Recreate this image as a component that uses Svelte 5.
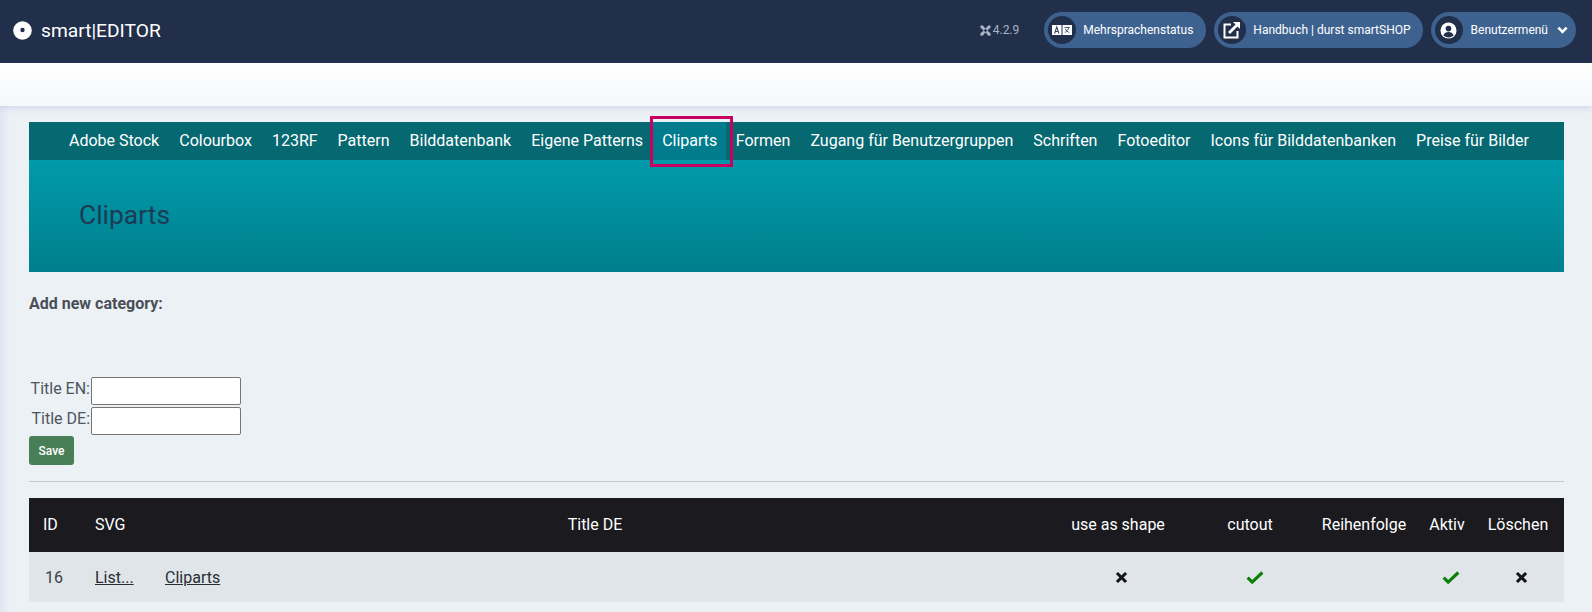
<script lang="ts">
  const navItems = [
    'Adobe Stock', 'Colourbox', '123RF', 'Pattern', 'Bilddatenbank', 'Eigene Patterns', 'Cliparts',
    'Formen', 'Zugang für Benutzergruppen', 'Schriften', 'Fotoeditor', 'Icons für Bilddatenbanken', 'Preise für Bilder'
  ];
</script>

<div class="page">
  <header class="topbar">
    <div class="brand">
      <svg class="logo" viewBox="0 0 20 20" width="19" height="19">
        <circle cx="10" cy="10" r="9.800" fill="#fff" />
        <circle cx="10" cy="9.500" r="2.300" fill="#212f4a" />
      </svg>
      <span>smart|EDITOR</span>
    </div>
    <div class="actions">
      <span class="version">
        <svg viewBox="0 0 12 12" width="11" height="11">
          <path d="M2 2l8 8M10 2l-8 8" stroke="#aab3c2" stroke-width="3" fill="none" />
          <circle cx="2" cy="2" r="1.700" fill="#aab3c2" /><circle cx="10" cy="2" r="1.700" fill="#aab3c2" />
          <circle cx="2" cy="10" r="1.700" fill="#aab3c2" /><circle cx="10" cy="10" r="1.700" fill="#aab3c2" />
          <path d="M6 4.200L7.800 6 6 7.800 4.200 6z" fill="#212f4a" />
        </svg>
        4.2.9
      </span>
      <a class="pill lang">
        <span class="pill-icon">
          <svg viewBox="0 0 20 10" width="20" height="10">
            <rect x="0" y="0" width="9.500" height="10" fill="#fff" />
            <rect x="10.500" y="0" width="9.500" height="10" fill="#fff" />
            <path d="M2.600 8.500L4.750 2l2.150 6.500M3.400 6.500h2.700" stroke="#3a4a68" stroke-width="1.100" fill="none" />
            <path d="M12.500 2.500h5M16.800 2.500c-.6 2.600-2.200 4-4 5M13.400 4c.7 1.600 2 2.800 3.800 3.500" stroke="#3a4a68" stroke-width=".9" fill="none" />
          </svg>
        </span>
        Mehrsprachenstatus
      </a>
      <a class="pill">
        <span class="pill-icon">
          <svg viewBox="0 0 18 18" width="18" height="18">
            <path d="M8 3.500H1.500v13H14.500V10" stroke="#fff" stroke-width="2" fill="none" />
            <path d="M6 12L14.500 3.500" stroke="#fff" stroke-width="2.800" fill="none" />
            <path d="M10 1h7v7z" fill="#fff" />
          </svg>
        </span>
        Handbuch | durst smartSHOP
      </a>
      <a class="pill user">
        <span class="pill-icon">
          <svg viewBox="0 0 18 18" width="17" height="17">
            <circle cx="9" cy="9" r="8.500" fill="#fff" />
            <circle cx="9" cy="7" r="3" fill="#212f4a" />
            <path d="M3.600 14c1-2.600 3-3.400 5.400-3.400s4.400.8 5.400 3.400c-1.400 1.400-3.300 2.300-5.400 2.300s-4-.9-5.400-2.300z" fill="#212f4a" />
          </svg>
        </span>
        Benutzermenü
        <svg class="chevron" viewBox="0 0 12 8" width="11" height="8">
          <path d="M1.500 1.500L6 6l4.500-4.500" stroke="#fff" stroke-width="2.800" fill="none" />
        </svg>
      </a>
    </div>
  </header>

  <div class="subbar"></div>

  <main class="content">
    <nav class="tabs">
      {#each navItems as item}
        <a class="tab" class:current={item === 'Cliparts'}>{item}</a>
      {/each}
    </nav>
    <div class="hero"><h1>Cliparts</h1></div>

    <p class="add-title">Add new category:</p>

    <form class="add-form">
      <div class="field"><label for="title-en">Title EN:</label><input id="title-en" type="text" /></div>
      <div class="field"><label for="title-de">Title DE:</label><input id="title-de" type="text" /></div>
      <button type="button" class="save">Save</button>
    </form>

    <hr />

    <table>
      <thead>
        <tr>
          <th class="c-id">ID</th>
          <th class="c-svg">SVG</th>
          <th class="c-title">Title DE</th>
          <th class="c-shape">use as shape</th>
          <th class="c-cutout">cutout</th>
          <th class="c-order">Reihenfolge</th>
          <th class="c-active">Aktiv</th>
          <th class="c-delete">Löschen</th>
        </tr>
      </thead>
      <tbody>
        <tr>
          <td class="c-id">16</td>
          <td class="c-svg"><a href="#list">List...</a></td>
          <td class="c-title"><a href="#cliparts">Cliparts</a></td>
          <td class="c-shape">
            <svg viewBox="0 0 12 12" width="13" height="13"><path d="M1.800 1.800l8.400 8.400M10.200 1.800l-8.400 8.400" stroke="#14141a" stroke-width="2.800" fill="none" /></svg>
          </td>
          <td class="c-cutout">
            <svg viewBox="0 0 16 12" width="18" height="14"><path d="M1.500 6.500l4 4 9-8.500" stroke="#0a8008" stroke-width="2.800" fill="none" /></svg>
          </td>
          <td class="c-order"></td>
          <td class="c-active">
            <svg viewBox="0 0 16 12" width="18" height="14"><path d="M1.500 6.500l4 4 9-8.500" stroke="#0a8008" stroke-width="2.800" fill="none" /></svg>
          </td>
          <td class="c-delete">
            <svg viewBox="0 0 12 12" width="13" height="13"><path d="M1.800 1.800l8.400 8.400M10.200 1.800l-8.400 8.400" stroke="#14141a" stroke-width="2.800" fill="none" /></svg>
          </td>
        </tr>
      </tbody>
    </table>
  </main>
</div>

<style>
  :global(body) {
    margin: 0;
    background: #ecf1f6;
    font-family: Roboto, "Liberation Sans", sans-serif;
  }

  .page {
    height: 612px;
    overflow: hidden;
    position: relative;
    background: linear-gradient(90deg, #dfe5f2 0, #ecf1f6 10px);
  }

  .topbar {
    height: 63px;
    box-sizing: border-box;
    padding: 0 16px 3px 13px;
    background: #212f4a;
    display: flex;
    align-items: center;
    justify-content: space-between;
    color: #fff;
  }

  .brand {
    display: flex;
    align-items: center;
    gap: 9px;
    font-size: 19.200px;
  }

  .logo {
    display: block;
  }

  .actions {
    display: flex;
    align-items: center;
    gap: 8px;
  }

  .version {
    display: flex;
    align-items: center;
    gap: 2px;
    font-size: 12px;
    color: #aab3c2;
    margin-right: 17px;
  }

  .pill {
    height: 36px;
    box-sizing: border-box;
    display: flex;
    align-items: center;
    gap: 7px;
    padding: 0 12px 0 4px;
    background: #3e6290;
    border-radius: 18px;
    font-size: 12px;
    color: #fff;
  }

  .lang {
    padding-right: 13px;
  }

  .user {
    gap: 8px;
    padding-right: 8px;
  }

  .pill-icon {
    width: 28px;
    height: 28px;
    border-radius: 50%;
    background: #212f4a;
    display: flex;
    align-items: center;
    justify-content: center;
  }

  .chevron {
    margin-left: 1px;
  }

  .subbar {
    height: 43px;
    background: linear-gradient(180deg, #fff, #f5f7fb);
    box-shadow: 0 2px 6px rgba(120, 145, 190, 0.25);
  }

  .content {
    padding: 16px 28px 0 29px;
    color: #4a4f57;
  }

  .tabs {
    height: 38px;
    background: #066871;
    display: flex;
    padding-left: 30px;
  }

  .tab {
    display: flex;
    align-items: center;
    padding: 0 10px 2px;
    font-size: 16px;
    color: #fff;
    white-space: nowrap;
  }

  .tab.current {
    padding: 0 8.500px 2px 9px;
    background: #007c8c;
    position: relative;
  }

  .tab.current::after {
    content: "";
    position: absolute;
    inset: -6px -7.500px -7px -3px;
    border: 3px solid #c8005f;
  }

  .hero {
    height: 112px;
    box-sizing: border-box;
    background: linear-gradient(180deg, #009aaa, #007f8d);
    padding: 41px 50px 0;
  }

  .hero h1 {
    margin: 0;
    font-size: 26.400px;
    font-weight: 400;
    line-height: 28px;
    color: #1f3a55;
  }

  .add-title {
    margin: 23px 0 0;
    font-size: 16px;
    line-height: 18px;
    font-weight: 700;
  }

  .add-form {
    margin-top: 63px;
  }

  .field {
    display: flex;
    align-items: center;
    height: 30px;
    width: 212px;
  }

  .field label {
    width: 61px;
    padding-bottom: 5px;
    text-align: right;
    font-size: 16px;
    color: #4f5560;
  }

  .field input {
    width: 150px;
    height: 28px;
    box-sizing: border-box;
    margin: 0 0 0 1px;
    border: 1px solid #767676;
    border-radius: 2px;
    background: #fff;
  }

  .save {
    display: block;
    margin-top: 0;
    width: 45px;
    height: 29px;
    border: 0;
    border-radius: 3px;
    background: #487f56;
    color: #fff;
    font-family: inherit;
    font-size: 12px;
    font-weight: 500;
    padding: 0;
  }

  hr {
    margin: 16px 0;
    border: 0;
    border-top: 1px solid #c4c8cd;
  }

  table {
    width: 100%;
    border-collapse: collapse;
    table-layout: fixed;
    font-size: 16px;
  }

  thead tr {
    height: 54px;
    background: #1a1a1f;
    color: #fff;
  }

  th {
    font-weight: 400;
    font-size: 16px;
    text-align: center;
    padding: 0 0 2px;
  }

  tbody tr {
    height: 50px;
    background: #e0e5e9;
  }

  td {
    padding: 0;
    text-align: center;
    color: #3a4048;
  }

  td a {
    color: #2a2d34;
  }

  td svg {
    display: inline-block;
    vertical-align: middle;
    margin: 0 0 2px 7px;
  }

  td.c-cutout svg {
    margin-left: 10px;
  }

  .c-id {
    width: 66px;
    box-sizing: border-box;
  }

  th.c-id {
    text-align: left;
    padding-left: 14px;
  }

  td.c-id {
    text-align: left;
    padding-left: 16px;
  }

  .c-svg {
    width: 53px;
  }

  th.c-svg,
  td.c-svg {
    text-align: left;
  }

  td.c-title {
    text-align: left;
    padding-left: 17px;
  }

  .c-shape {
    width: 152px;
  }

  .c-cutout {
    width: 112px;
  }

  .c-order {
    width: 116px;
  }

  .c-active {
    width: 50px;
  }

  .c-delete {
    width: 92px;
  }
</style>
